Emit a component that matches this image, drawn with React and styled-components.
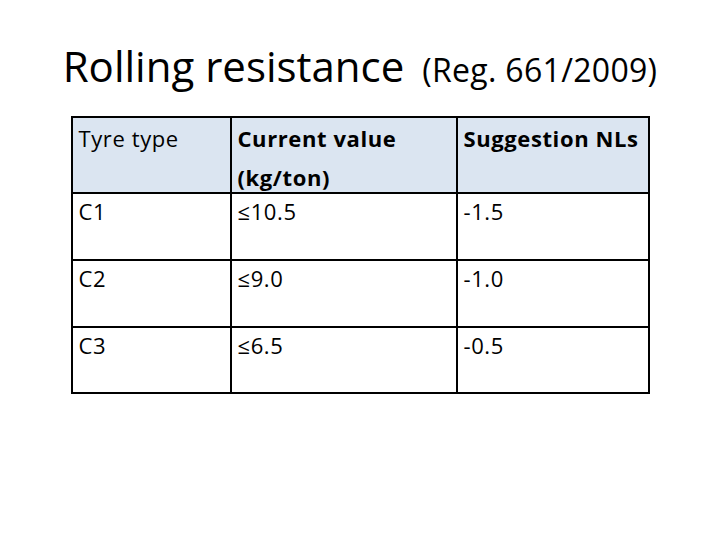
import React from "react";
import styled, { createGlobalStyle } from "styled-components";

const Global = createGlobalStyle`
  html, body { margin: 0; padding: 0; background: #ffffff; }
  body { font-family: "Open Sans", Lato, sans-serif; color: #000; }
`;

const Slide = styled.div`
  width: 720px;
  height: 540px;
  display: flex;
  flex-direction: column;
  align-items: center;
  overflow: hidden;
`;

const Title = styled.h1`
  margin: 36px 0 0;
  height: 60px;
  font-weight: 400;
  font-size: 42px;
  line-height: 60px;
  white-space: nowrap;
`;

const Small = styled.span`
  margin-left: 18px;
  font-size: 32px;
  line-height: 1;
  letter-spacing: 0.3px;
`;

const Grid = styled.div`
  margin-top: 20px;
  display: grid;
  grid-template-columns: 157px 224px 190px;
  grid-template-rows: 74px 65px 65px 64px;
  gap: 2px;
  padding: 2px;
  background: #000;
`;

const Cell = styled.div`
  background: ${(p) => (p.$head ? "#dbe5f1" : "#ffffff")};
  padding: 0 6px;
  font-size: 22px;
  letter-spacing: 0.6px;
  line-height: ${(p) => (p.$head ? 39 : 34)}px;
  padding-top: ${(p) => (p.$head ? 1 : 0)}px;
  font-weight: ${(p) => (p.$bold ? 700 : 400)};
  white-space: nowrap;
`;

const rows = [
  ["C1", "≤10.5", "-1.5"],
  ["C2", "≤9.0", "-1.0"],
  ["C3", "≤6.5", "-0.5"],
];

export default function App() {
  return (
    <>
      <Global />
      <Slide>
        <Title>
          Rolling resistance<Small>(Reg. 661/2009)</Small>
        </Title>
        <Grid>
          <Cell $head>Tyre type</Cell>
          <Cell $head $bold>
            Current value
            <br />
            (kg/ton)
          </Cell>
          <Cell $head $bold>
            Suggestion NLs
          </Cell>
          {rows.map((r) =>
            r.map((c, i) => <Cell key={r[0] + i}>{c}</Cell>)
          )}
        </Grid>
      </Slide>
    </>
  );
}
